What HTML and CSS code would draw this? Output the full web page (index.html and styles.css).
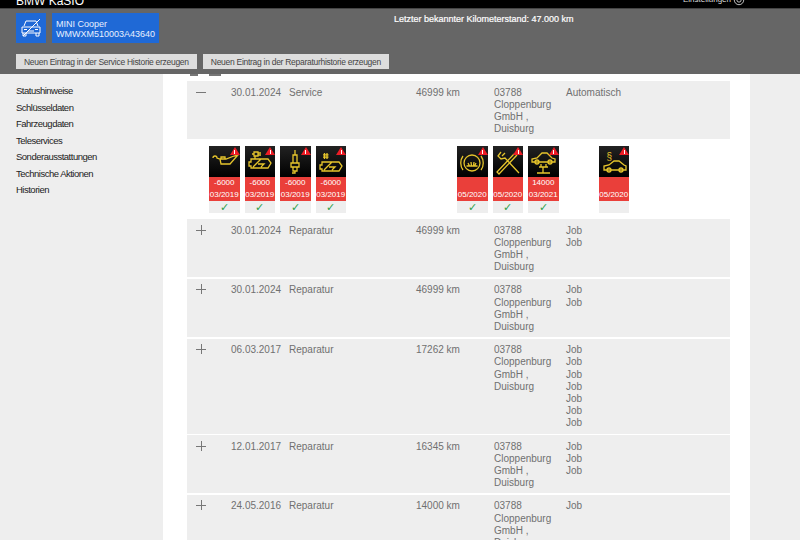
FILE: index.html
```html
<!DOCTYPE html>
<html lang="de">
<head>
    <meta charset="UTF-8">
    <meta name="viewport" content="width=device-width, initial-scale=1.0">
    <title>BMW KaSIO</title>
    <link rel="stylesheet" href="styles.css">
</head>
<body>

    <div class="topbar">
        <div class="brand">BMW KaSIO</div>
        <div class="settings">Einstellungen
            <svg class="gear" viewBox="0 0 14 14"><circle cx="7" cy="7" r="5.5"/><circle cx="7" cy="7" r="2.5"/></svg>
        </div>
    </div>

    <div class="header">
        <div class="header-top">
            <div class="car-box">
                <svg viewBox="0 0 30 30" class="car-icon">
                    <path d="M8 13l2-5h10l2 5M6 14h18v6H6zM7 20v3h3v-3M20 20v3h3v-3M8 16.500h3M19 16.500h3M12 18h6"/>
                    <path class="slash" d="M7 23L24 6"/>
                </svg>
            </div>
            <div class="car-name">MINI Cooper<br>WMWXM510003A43640</div>
            <div class="mileage">Letzter bekannter Kilometerstand: 47.000 km</div>
        </div>
        <div class="header-buttons">
            <button>Neuen Eintrag in der Service Historie erzeugen</button>
            <button>Neuen Eintrag in der Reparaturhistorie erzeugen</button>
        </div>
    </div>

    <div class="main">
        <div class="sidebar">
            <a>Statushinweise</a>
            <a>Schlüsseldaten</a>
            <a>Fahrzeugdaten</a>
            <a>Teleservices</a>
            <a>Sonderausstattungen</a>
            <a>Technische Aktionen</a>
            <a>Historien</a>
        </div>

        <div class="content">
            <div class="clipped"><span></span><span></span></div>

            <div class="row">
                <div class="toggle"><svg viewBox="0 0 10 10"><path d="M0 5.500h10"/></svg></div>
                <div>30.01.2024</div>
                <div>Service</div>
                <div>46999 km</div>
                <div>03788<br>Cloppenburg<br>GmbH ,<br>Duisburg</div>
                <div>Automatisch</div>
            </div>

            <div class="tiles">
                <div class="tile">
                    <div class="tile-icon">
                        <svg viewBox="0 0 30 31"><path d="M4 12a2 2 0 1 1 4 0l3 1h6l8-3 4-1-8 9H12l-1-5M12 13v-2h4v2"/></svg>
                        <i class="warn"></i>
                    </div>
                    <div class="tile-red"><span>-6000</span><span>03/2019</span></div>
                    <div class="tile-foot">&#10003;</div>
                </div>
                <div class="tile">
                    <div class="tile-icon">
                        <svg viewBox="0 0 30 31"><path d="M9 6h4v4H9zM13 7h3M13 9h3M7 8h2M10 10v3M6 13h17l3 4-3 5H6v-2H4v-4h2zM8 21l8-8M13 18h6l-3 3"/></svg>
                        <i class="warn"></i>
                    </div>
                    <div class="tile-red"><span>-6000</span><span>03/2019</span></div>
                    <div class="tile-foot">&#10003;</div>
                </div>
                <div class="tile">
                    <div class="tile-icon">
                        <svg viewBox="0 0 30 31"><path d="M15 4v5M13 9h4v8h-4zM11 17h8v4h-8zM13 21h4v4h-4zM15 25v2h-3"/></svg>
                        <i class="warn"></i>
                    </div>
                    <div class="tile-red"><span>-6000</span><span>03/2019</span></div>
                    <div class="tile-foot">&#10003;</div>
                </div>
                <div class="tile">
                    <div class="tile-icon">
                        <svg viewBox="0 0 30 31"><path d="M8.500 7v6M11 7v6M7 8.800h5.500M7 11.200h5.500M6 16h17l3 4-3 5H6v-2H4v-4h2zM8 24l8-8M13 21h6l-3 3"/></svg>
                        <i class="warn"></i>
                    </div>
                    <div class="tile-red"><span>-6000</span><span>03/2019</span></div>
                    <div class="tile-foot">&#10003;</div>
                </div>

                <div class="tile tile-second">
                    <div class="tile-icon">
                        <svg viewBox="0 0 30 31"><circle cx="15" cy="17" r="8"/><path d="M9.500 20h11M11 17l1.500 3M14 16l.5 4M17 16l-.5 4M19 17l-1.500 3M6 10c-3 4-3 10 0 14M24 10c3 4 3 10 0 14"/></svg>
                        <i class="warn"></i>
                    </div>
                    <div class="tile-red"><span></span><span>05/2020</span></div>
                    <div class="tile-foot">&#10003;</div>
                </div>
                <div class="tile">
                    <div class="tile-icon">
                        <svg viewBox="0 0 30 31"><path d="M8 6L5 10l3 3 4-1 14 15M12 7l-3 3M24 9L6 28l-2-2L21 8"/></svg>
                        <i class="warn"></i>
                    </div>
                    <div class="tile-red"><span></span><span>05/2020</span></div>
                    <div class="tile-foot">&#10003;</div>
                </div>
                <div class="tile">
                    <div class="tile-icon">
                        <svg viewBox="0 0 30 31"><path d="M4 16v-3l5-1 5-5h5l5 5 3 1v3zM13 18v3h5v-3M11 21h9M15 21v6M9 27h13"/><circle cx="9" cy="16" r="2"/><circle cx="22" cy="16" r="2"/></svg>
                        <i class="warn"></i>
                    </div>
                    <div class="tile-red"><span>14000</span><span>03/2021</span></div>
                    <div class="tile-foot">&#10003;</div>
                </div>
                <div class="tile tile-last">
                    <div class="tile-icon">
                        <span class="para">§</span>
                        <svg viewBox="0 0 30 31"><path d="M5 24v-4l5-1 5-4h5l5 4 2 1v4z"/><circle cx="10" cy="24" r="2"/><circle cx="22" cy="24" r="2"/></svg>
                        <i class="warn"></i>
                    </div>
                    <div class="tile-red"><span></span><span>05/2020</span></div>
                    <div class="tile-foot"></div>
                </div>
            </div>

            <div class="row">
                <div class="toggle"><svg viewBox="0 0 10 10"><path d="M0 5.500h10M5.500 0v10"/></svg></div>
                <div>30.01.2024</div>
                <div>Reparatur</div>
                <div>46999 km</div>
                <div>03788<br>Cloppenburg<br>GmbH ,<br>Duisburg</div>
                <div>Job<br>Job</div>
            </div>
            <div class="row">
                <div class="toggle"><svg viewBox="0 0 10 10"><path d="M0 5.500h10M5.500 0v10"/></svg></div>
                <div>30.01.2024</div>
                <div>Reparatur</div>
                <div>46999 km</div>
                <div>03788<br>Cloppenburg<br>GmbH ,<br>Duisburg</div>
                <div>Job<br>Job</div>
            </div>
            <div class="row">
                <div class="toggle"><svg viewBox="0 0 10 10"><path d="M0 5.500h10M5.500 0v10"/></svg></div>
                <div>06.03.2017</div>
                <div>Reparatur</div>
                <div>17262 km</div>
                <div>03788<br>Cloppenburg<br>GmbH ,<br>Duisburg</div>
                <div>Job<br>Job<br>Job<br>Job<br>Job<br>Job<br>Job</div>
            </div>
            <div class="row">
                <div class="toggle"><svg viewBox="0 0 10 10"><path d="M0 5.500h10M5.500 0v10"/></svg></div>
                <div>12.01.2017</div>
                <div>Reparatur</div>
                <div>16345 km</div>
                <div>03788<br>Cloppenburg<br>GmbH ,<br>Duisburg</div>
                <div>Job<br>Job<br>Job</div>
            </div>
            <div class="row">
                <div class="toggle"><svg viewBox="0 0 10 10"><path d="M0 5.500h10M5.500 0v10"/></svg></div>
                <div>24.05.2016</div>
                <div>Reparatur</div>
                <div>14000 km</div>
                <div>03788<br>Cloppenburg<br>GmbH ,<br>Duisburg</div>
                <div>Job</div>
            </div>
        </div>

        <div class="rightbar"></div>
    </div>

</body>
</html>
```

FILE: styles.css
```css
/* Base Styles */
html, body {
    margin: 0;
    height: 540px;
    overflow: hidden;
}
body {
    font-family: "Liberation Sans", Arial, sans-serif;
    font-size: 10px;
    color: #666666;
    background-color: #ffffff;
}

/* Top bar */
.topbar {
    height: 8px;
    padding: 0 55px 0 16px;
    display: flex;
    justify-content: space-between;
    align-items: flex-end;
    background-color: #000000;
    border-bottom: 1px solid #444444;
    overflow: hidden;
    color: #ffffff;
}
.brand {
    font-size: 12px;
    line-height: 14px;
    flex-shrink: 0;
}
.settings {
    display: flex;
    align-items: center;
    gap: 2px;
    font-size: 8px;
    line-height: 12px;
    margin-bottom: 2px;
    flex-shrink: 0;
    color: #dddddd;
}
.gear {
    width: 12px;
    height: 12px;
    fill: none;
    stroke: #dddddd;
    stroke-width: 1;
}

/* Header */
.header {
    height: 65px;
    padding: 4px 16px 0;
    background-color: #666666;
    box-sizing: border-box;
}
.header-top {
    display: flex;
    height: 30px;
    gap: 6px;
}
.car-box {
    width: 30px;
    background-color: #1f69d6;
}
.car-icon {
    display: block;
    width: 30px;
    height: 30px;
    fill: none;
    stroke: #ffffff;
    stroke-width: 1;
}
.car-name {
    width: 107px;
    padding: 5.500px 0 0 4px;
    box-sizing: border-box;
    font-size: 9px;
    line-height: 10.500px;
    background-color: #1f69d6;
    color: #e8f0ff;
}
.mileage {
    margin: 1px 0 0 229px;
    font-size: 9px;
    line-height: 11px;
    color: #ffffff;
    -webkit-text-stroke: 0.2px #ffffff;
}
.header-buttons {
    display: flex;
    gap: 6px;
    margin-top: 11px;
}
button {
    height: 15px;
    padding: 0 8px;
    font-family: inherit;
    font-size: 8.500px;
    letter-spacing: -0.28px;
    color: #444444;
    background-color: #dddddd;
    border: none;
    white-space: nowrap;
}

/* Main columns */
.main {
    display: grid;
    grid-template-columns: 163px 587px 50px;
    height: 466px;
}
.sidebar {
    padding: 10px 0 0 16px;
    display: flex;
    flex-direction: column;
    background-color: #eeeeee;
    font-size: 9.500px;
    letter-spacing: -0.5px;
}
.sidebar a {
    height: 16.500px;
    line-height: 14px;
    color: #222222;
}
.rightbar {
    background-color: #eeeeee;
}

/* History list */
.content {
    padding: 0 20px 0 24px;
    overflow: hidden;
}
.clipped {
    height: 7px;
    display: flex;
    gap: 11px;
    padding-left: 3px;
}
.clipped span {
    width: 8px;
    height: 2px;
    background-color: #777777;
}
.clipped span + span {
    width: 12px;
}
.row {
    display: grid;
    grid-template-columns: 44px 58px 127px 78px 72px 1fr;
    padding: 5.500px 0 4px 0;
    margin-bottom: 1.500px;
    line-height: 12.200px;
    background-color: #eeeeee;
    color: #707070;
}
.toggle {
    padding-left: 9px;
}
.toggle svg {
    display: block;
    width: 10px;
    height: 10px;
    fill: none;
    stroke: #777777;
    stroke-width: 1;
}

/* Warning tiles */
.tiles {
    display: flex;
    gap: 5px;
    height: 78.200px;
    padding: 5.200px 0 0 22px;
    box-sizing: border-box;
}
.tile {
    width: 30.500px;
    text-align: center;
}
.tile-second {
    margin-left: 106px;
}
.tile-last {
    margin-left: 35px;
}
.tile-icon {
    position: relative;
    height: 31px;
    background: linear-gradient(#222222, #000000);
}
.tile-icon svg {
    display: block;
    width: 30px;
    height: 31px;
    fill: none;
    stroke: #e6c52c;
    stroke-width: 1.300;
}
.warn {
    position: absolute;
    top: 1px;
    right: 0;
    width: 0;
    height: 0;
    border-left: 5px solid transparent;
    border-right: 5px solid transparent;
    border-bottom: 8px solid #ee1c25;
}
.warn::after {
    content: "";
    position: absolute;
    left: -0.500px;
    top: 3px;
    width: 1px;
    height: 4px;
    background-color: #ffffff;
}
.para {
    position: absolute;
    left: 8px;
    top: 6px;
    font-size: 10px;
    line-height: 10px;
    color: #e6c52c;
}
.tile-red {
    display: flex;
    flex-direction: column;
    height: 24px;
    background-color: #ea3f3a;
    color: #ffffff;
    font-size: 8px;
    line-height: 12px;
}
.tile-red span {
    height: 12px;
}
.tile-foot {
    height: 12px;
    line-height: 12px;
    background-color: #eeeeee;
    color: #2e9e4a;
    font-size: 11px;
}
```
